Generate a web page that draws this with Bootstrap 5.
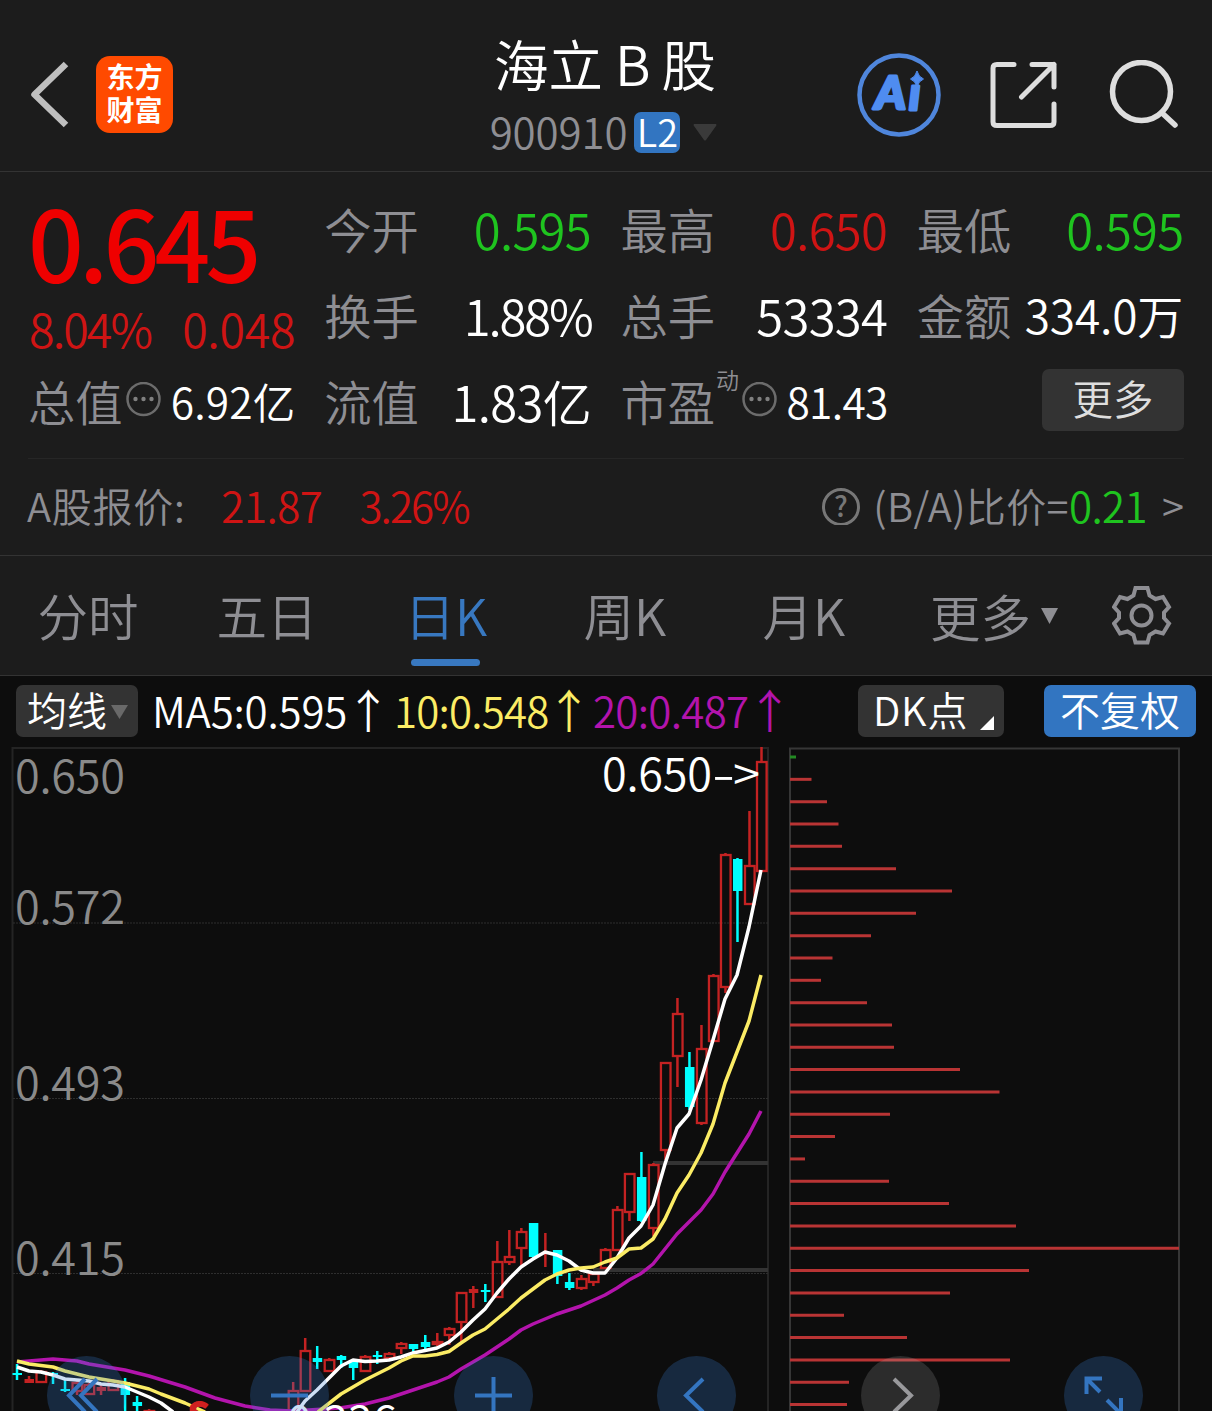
<!DOCTYPE html>
<html lang="zh-CN">
<head>
<meta charset="utf-8">
<meta name="viewport" content="width=device-width, initial-scale=1">
<title>海立B股 900910</title>
<link href="https://cdn.jsdelivr.net/npm/bootstrap@5.3.0/dist/css/bootstrap.min.css" rel="stylesheet">
<style>
  body { background:#0d0d0d; color:#fff; font-family:"Noto Sans CJK SC","Noto Sans",sans-serif; font-weight:350; overflow:hidden; white-space:nowrap; }
  .screen { width:1212px; height:1411px; overflow:hidden; }
  .panel { background:#1c1c1c; border-bottom:1px solid #333; }
  .topbar { height:172px; padding:18px 33px 0 30px; }
  .side { flex:1 1 0; }
  .app-logo { width:77px; height:77px; margin-left:27px; border-radius:14px; background:#ff4a00; font-size:28px; line-height:33px; font-weight:700; padding-top:4px; }
  .stock-name { font-size:54.5px; line-height:68px; padding-top:3px; margin-bottom:-3px; padding-left:1px; }
  .stock-name .latin { margin:0 11px 0 12px; }
  .stock-code { font-size:42px; line-height:66px; color:#8e8e93; padding-top:4px; }
  .stock-code .digits { letter-spacing:-.1px; margin-left:-2px; }
  .level { font-size:38px; line-height:41px; height:41px; width:46px; border-radius:7px; background:#3275c1; margin:4px 13px 0 7px; }
  .level span { position:relative; top:-2px; }
  .quote { height:384px; padding:13px 28px 0; }
  .quote-grid { display:grid; grid-template-columns:repeat(4,1fr); grid-template-rows:repeat(3,86px); column-gap:29px; height:274px; border-bottom:1px solid #262626; }
  .cell { display:flex; align-items:center; justify-content:space-between; font-size:49px; line-height:87px; }
  .cell .lbl { font-size:47.3px; color:#8e8e93; }
  .n1 { letter-spacing:-.7px; margin-right:.5px; }
  .n2 { letter-spacing:-2.2px; margin-right:0; }
  .s44 { font-size:42.5px; letter-spacing:-.7px; }
  .s46 { font-size:46px; letter-spacing:-.2px; margin-right:1px; }
  .headline { grid-row:span 2; color:#ef0000; padding-left:1px; }
  .price { font-size:98px; font-weight:500; line-height:110px; letter-spacing:-4.8px; margin-left:-1px; }
  .chg { font-size:46.5px; line-height:60px; color:#cf1414; margin-top:3px; }
  .up { color:#cf1414; } .down { color:#1fc41f; }
  .more-btn { width:142px; height:62px; margin-left:auto; border-radius:7px; background:#333; color:#dedede; font-size:40.500px; line-height:58px; text-align:center; }
  .pe { font-size:23px; line-height:24px; color:#8e8e93; align-self:flex-start; margin:10px 0 0 1px; }
  .compare { height:96px; font-size:40px; color:#8e8e93; line-height:90px; padding-bottom:4px; }
  .compare .up, .compare .down { font-size:42px; }
  .tabs { height:120px; font-size:50.5px; color:#8e8e93; line-height:117px; }
  .tabs .tab { width:179px; text-align:center; position:relative; padding-right:3px; }
  .tabs .active { color:#3878c0; }
  .tabs .active::after { content:""; position:absolute; left:53px; bottom:9px; width:69px; height:7px; border-radius:4px; background:#3878c0; }
  .tools { height:71px; padding:9px 16px 0; font-size:42px; }
  .chip { height:52px; border-radius:7px; background:#333; font-size:40px; line-height:48px; }
  .ma { line-height:49px; display:flex; letter-spacing:-.2px; }
  .ma .arr { width:36px; display:flex; justify-content:center; font-size:46px; line-height:46px; }
  .plot { width:1212px; height:664px; }
  .plot svg { display:block; }
  .dock { position:absolute; left:47px; top:609px; width:1096px; }
  .dock span { width:79px; height:79px; border-radius:50%; background:rgba(57,129,217,.25); }
  .dock .off { background:rgba(168,168,168,.2); }
  .dock svg { display:block; fill:none; stroke:#3475c0; stroke-width:4; }
</style>
<script src="https://cdn.jsdelivr.net/npm/bootstrap@5.3.0/dist/js/bootstrap.bundle.min.js"></script>
</head>
<body>
<main class="screen">
  <header class="panel topbar d-flex align-items-center">
    <div class="side d-flex align-items-center">
      <svg width="39" height="68" viewBox="0 0 39 68" fill="none" stroke="#bfbfbf" stroke-width="6.5"><path d="M36 3 4.500 33.500 36 64" stroke-linejoin="round"/></svg>
      <div class="app-logo text-center">东方<br>财富</div>
    </div>
    <div class="text-center">
      <div class="stock-name">海立<span class="latin">B</span>股</div>
      <div class="stock-code d-flex align-items-center justify-content-center"><span class="digits">900910</span><span class="level text-white"><span>L2</span></span><svg width="24" height="17" class="mt-1"><path d="M1 0h22q1 1 0 2L13 16q-1 1-2 0L1 2q-1-1 0-2" fill="#3a3a3a"/></svg></div>
    </div>
    <div class="side d-flex align-items-center justify-content-end gap-5">
      <svg width="84" height="84" viewBox="0 0 84 84"><circle cx="42" cy="42" r="39.500" fill="none" stroke="#4f86dc" stroke-width="4.500"/><g fill="#4f8cf0" stroke="#4f8cf0" stroke-width="3" stroke-linejoin="round" font-family="Lato" font-weight="900" font-style="italic"><text x="18" y="56" font-size="46" textLength="31" lengthAdjust="spacingAndGlyphs">A</text><text x="52" y="57" font-size="45">ı</text></g><path d="M60 18q1.500 6 6.500 8-5 2-6.500 8-1.500-6-6.500-8 5-2 6.500-8" fill="#4f8cf0" stroke="#4f8cf0"/></svg>
      <svg width="70" height="70" viewBox="0 0 70 70" fill="none" stroke="#dedede" stroke-width="5" stroke-linecap="round" stroke-linejoin="round"><path d="M25 4.500H8Q4 4.500 4 8V62Q4 65.500 8 65.500H61Q65 65.500 65 62V44M43 4.500H65V27M32.500 37 65 4.500"/></svg>
      <svg width="72" height="70" viewBox="0 0 72 70" fill="none" stroke="#dedede" stroke-width="5.500" stroke-linecap="round"><circle cx="34.500" cy="31.500" r="29"/><path d="M54.500 52.500 68 65"/></svg>
    </div>
  </header>

  <section class="panel quote">
    <div class="quote-grid">
      <div class="headline"><div class="price">0.645</div><div class="chg d-flex justify-content-between"><span style="letter-spacing:-1.900px">8.04%</span><span style="letter-spacing:-.3px">0.048</span></div></div>
      <div class="cell"><span class="lbl">今开</span><span class="n1 down">0.595</span></div>
      <div class="cell"><span class="lbl">最高</span><span class="n1 up">0.650</span></div>
      <div class="cell"><span class="lbl">最低</span><span class="n1 down">0.595</span></div>
      <div class="cell"><span class="lbl">换手</span><span class="n2">1.88%</span></div>
      <div class="cell"><span class="lbl">总手</span><span class="n1">53334</span></div>
      <div class="cell"><span class="lbl">金额</span><span class="s46">334.0万</span></div>
      <div class="cell"><span class="lbl">总值</span><svg class="me-auto" style="margin-left:3px" width="35" height="36" viewBox="0 0 35 36"><circle cx="17.500" cy="17" r="16" fill="none" stroke="#6c6c6c" stroke-width="2.500"/><g fill="#808080"><circle cx="9.500" cy="17" r="2.200"/><circle cx="17.500" cy="17" r="2.200"/><circle cx="25.500" cy="17" r="2.200"/></g></svg><span class="s44" style="letter-spacing:.1px">6.92亿</span></div>
      <div class="cell"><span class="lbl">流值</span><span class="n1">1.83亿</span></div>
      <div class="cell"><span class="lbl">市盈</span><span class="pe">动</span><svg class="me-auto" style="margin-left:3px" width="35" height="36" viewBox="0 0 35 36"><circle cx="17.500" cy="17" r="16" fill="none" stroke="#6c6c6c" stroke-width="2.500"/><g fill="#808080"><circle cx="9.500" cy="17" r="2.200"/><circle cx="17.500" cy="17" r="2.200"/><circle cx="25.500" cy="17" r="2.200"/></g></svg><span class="s44">81.43</span></div>
      <div class="cell"><div class="more-btn">更多</div></div>
    </div>
    <div class="compare d-flex align-items-center">
      <span style="letter-spacing:.7px;margin-left:-1px">A股报价:</span><span class="up" style="margin-left:36px;letter-spacing:-.5px">21.87</span><span class="up" style="margin-left:37px;letter-spacing:-1.900px">3.26%</span>
      <svg class="ms-auto" width="40" height="40" viewBox="0 0 40 40"><circle cx="20" cy="22" r="17.500" fill="none" stroke="#777" stroke-width="3"/><text x="20" y="32" text-anchor="middle" font-size="28" font-weight="500" fill="#777">?</text></svg>
      <span style="margin-left:12px;letter-spacing:.4px">(B/A)比价=</span><span class="down" style="letter-spacing:-.6px">0.21</span><span style="margin-left:15px">&gt;</span>
    </div>
  </section>

  <nav class="panel tabs d-flex">
    <div class="tab">分时</div><div class="tab">五日</div><div class="tab active">日K</div><div class="tab">周K</div><div class="tab">月K</div>
    <div class="d-flex align-items-center ps-4" style="width:217px"><span style="margin-left:11px">更多</span><svg width="17" height="16" style="margin-left:10px"><path d="M0 0H17L8.500 16Z" fill="#8e8e93"/></svg></div>
    <svg class="align-self-center" width="60" height="60" viewBox="0 0 60 60" fill="none" stroke="#8e8e93" stroke-width="4"><path d="M23.500 2H35.500L37.500 9.500 43.500 13 51 11 57 21 52 26.500V32L57 37.500 51 47.500 43.500 45.500 37.500 49 35.500 56.500H23.500L21.500 49 15.500 45.500 8 47.500 2 37.500 7 32V26.500L2 21 8 11 15.500 13 21.500 9.500Z"/><circle cx="29.500" cy="29.500" r="10"/></svg>
  </nav>

  <div class="tools d-flex">
    <div class="chip d-flex ps-2" style="width:122px"><span style="margin-left:3px">均线</span><svg width="17" height="14" style="margin:20px 0 0 4px"><path d="M0 0H17L8.500 14Z" fill="#696969"/></svg></div>
    <div class="ma" style="width:242px;padding-left:14px">MA5:0.595<span class="arr" style="margin-left:3px">↑</span></div>
    <div class="ma" style="width:199px;padding-left:14px;color:#fbec65;letter-spacing:-.8px">10:0.548<span class="arr" style="margin-left:2px">↑</span></div>
    <div class="ma" style="color:#b314ac;padding-left:14px;letter-spacing:-.7px">20:0.487<span class="arr" style="margin-left:3px">↑</span></div>
    <div class="chip ms-auto d-flex" style="width:146px;padding-left:15px;letter-spacing:.8px">DK点<svg width="14" height="14" style="margin:31px 0 0 12px"><path d="M14 0V14H0Z" fill="#fff"/></svg></div>
    <div class="chip text-center" style="width:152px;margin-left:40px;background:#3275c1">不复权</div>
  </div>

  <section class="plot position-relative">
    <svg id="chart" width="1212" height="664" viewBox="0 747 1212 664" font-family="Noto Sans CJK SC">
      <g fill="none" stroke="#242424" stroke-width="2"><path d="M12.500 1411V748H768V1411"/><path d="M13 923H768M13 1098.500H768M13 1273.500H768" stroke="#2e2e2e" stroke-width="1" stroke-dasharray="2 1"/><path d="M790 1411V748.500H1179V1411" stroke="#363636"/></g>
      <path d="M653 1163H768M593 1270H768" stroke="#333" stroke-width="4"/>
      <g id="volume"></g><g id="candles"></g>
      <g id="averages" fill="none" stroke-width="3.500" stroke-linejoin="round"></g>
      <g fill="#8a8a8a" font-size="45"><text x="15" y="793" textLength="110">0.650</text><text x="15" y="924" textLength="110">0.572</text><text x="15" y="1100" textLength="110">0.493</text><text x="15" y="1275" textLength="110">0.415</text></g>
      <g fill="#fff" font-size="45"><text x="602" y="791" textLength="110">0.650</text><text x="712" y="791" textLength="23" lengthAdjust="spacingAndGlyphs">-</text><text x="733" y="791" textLength="27" lengthAdjust="spacingAndGlyphs">&gt;</text><text x="287" y="1439" textLength="110">0.336</text></g>
      <text x="187" y="1429" font-size="37" font-weight="900" fill="#cf2020">S</text>
    </svg>
    <div class="dock d-flex justify-content-between">
      <span><svg width="79" height="79"><path d="M38 23 22 39.500 38 56M50 23 34 39.500 50 56"/></svg></span>
      <span><svg width="79" height="79"><path d="M21 39.500H58"/></svg></span>
      <span><svg width="79" height="79"><path d="M21 39.500H58M39.500 21V58"/></svg></span>
      <span><svg width="79" height="79"><path d="M46 23 29 39.500 46 56"/></svg></span>
      <span class="off"><svg width="79" height="79" style="stroke:#99999c"><path d="M33 23 50 39.500 33 56"/></svg></span>
      <span><svg width="79" height="79"><path d="M38 22.500H22.500V38M23 23 36 36M43 44 56 57M57 42V58H42"/></svg></span>
    </div>
  </section>
</main>
<script>
  // [slot, type, high, top, bottom, low]; h = hollow red, f = filled red, c = cyan
  const candles = [
    [0,'c',1364,1373,1375,1380],[1,'f',1376,1379,1383,1383],[2,'h',1370,1372,1382,1383],[3,'c',1372,1373,1375,1384],[4,'c',1378,1389,1391,1392],
    [5,'h',1381,1383,1391,1395],[6,'h',1383,1385,1394,1394],[7,'f',1383,1387,1391,1395],[8,'h',1379,1381,1390,1391],[9,'c',1378,1382,1395,1415],
    [10,'c',1396,1402,1406,1415],[11,'h',1409,1411,1420,1420],[23,'h',1382,1391,1420,1420],[24,'h',1338,1351,1391,1391],[25,'c',1346,1358,1362,1369],
    [26,'h',1358,1360,1371,1372],[27,'c',1355,1356,1360,1368],[28,'c',1360,1362,1368,1380],[29,'h',1355,1357,1371,1372],[30,'c',1351,1355,1357,1364],
    [31,'h',1352,1354,1358,1359],[32,'h',1342,1344,1348,1354],[33,'c',1344,1344,1349,1352],[34,'c',1335,1342,1347,1352],[35,'h',1333,1342,1344,1346],
    [36,'h',1327,1329,1335,1345],[37,'h',1292,1293,1322,1342],[38,'f',1286,1289,1293,1308],[39,'c',1284,1290,1292,1302],[40,'h',1241,1262,1297,1298],
    [41,'h',1230,1257,1262,1265],[42,'h',1228,1232,1248,1265],[43,'c',1223,1223,1257,1258],[44,'f',1233,1250,1250,1267],[45,'c',1250,1250,1276,1284],
    [46,'c',1273,1282,1288,1290],[47,'h',1275,1279,1288,1290],[48,'h',1272,1274,1282,1286],[49,'h',1248,1250,1268,1269],[50,'h',1206,1210,1250,1251],
    [51,'h',1173,1174,1212,1221],[52,'c',1152,1177,1221,1222],[53,'h',1163,1165,1228,1236],[54,'h',1062,1063,1150,1160],[55,'h',998,1014,1056,1087],
    [56,'c',1052,1067,1107,1110],[57,'h',1025,1049,1123,1125],[58,'h',974,976,1041,1042],[59,'h',853,855,987,993],[60,'c',858,859,891,942],
    [61,'h',811,866,904,905],[62,'h',747,762,871,872]];
  const averages = {
    '#b314ac': [[17,1362,29,1361,53,1359,65,1360,77,1361,89,1364,125,1370,149,1376,185,1387,215,1398,245,1406,270,1410,293,1411,340,1408,365,1404,389,1398,413,1390,437,1382,449,1377,461,1369,485,1355,509,1339,521,1330,533,1324,545,1319,557,1314,581,1306,605,1295,617,1288,629,1280,641,1273.5,653,1264,665,1249,677,1234,701,1210,713,1194,725,1172,737,1153,749,1134,761,1111]],
    '#fff': [[17,1367,29,1371,41,1372,53,1375,65,1379,77,1380,89,1381,101,1384,113,1385,125,1387,137,1392,149,1397,161,1403,173,1412],[297,1412,305,1401,317,1390,329,1378,341,1366,353,1360,365,1361.5,377,1361,389,1360,401,1357,413,1353,425,1350.5,437,1348,449,1342,461,1332,473,1320,485,1309,497,1293,509,1279,521,1267,533,1259,545,1252,557,1255,569,1261,581,1270,593,1273,605,1273,617,1258,629,1238,641,1226,653,1205,665,1164,677,1128,689,1114,701,1080,713,1040,725,999,737,975,749,927,761,870]],
    '#fbec65': [[17,1361,29,1364,53,1367,65,1371,77,1374,89,1377,125,1383,149,1389,161,1394,185,1403,205,1412],[318,1412,341,1394,365,1380,389,1368,401,1361,413,1356,425,1356,437,1354.5,449,1351.5,461,1343,473,1335,485,1329,497,1319,509,1309,521,1298,533,1289,545,1280,557,1274,569,1270,581,1268,593,1267,605,1262,617,1258,629,1249,641,1248,653,1239,665,1219,677,1193,689,1175,701,1153,713,1124,725,1083,737,1052,749,1021,761,975]]
  };
  const volume = [796,811.5,827,838.5,842,896,952,916,871,832.5,821,867,892,894,960,999.5,890,835,805,889,949,1016,1179,1029,950,844,907,1010,849,847];
  document.getElementById('candles').innerHTML = candles.map(([i,k,h,t,b,l]) => {
    const x = 17 + i * 12.008, col = k === 'c' ? '#00ffff' : '#c42222';
    const wick = k === 'h' ? `M${x} ${h}V${t}M${x} ${b}V${l}` : `M${x} ${h}V${l}`;
    const body = k === 'h' ? `<rect x="${x-4.5}" y="${t}" width="9.600" height="${b-t}" fill="none" stroke="${col}" stroke-width="2.300"/>`
                           : `<rect x="${x-4.5}" y="${t}" width="9.500" height="${b-t}" fill="${col}"/>`;
    return `<path d="${wick}" stroke="${col}" stroke-width="2.500"/>${body}`;
  }).join('');
  document.getElementById('averages').innerHTML = Object.entries(averages).map(([c,lines]) =>
    lines.map(p => `<polyline points="${p.join(' ')}" stroke="${c}"/>`).join('')).join('');
  document.getElementById('volume').innerHTML = volume.map((x,i) =>
    `<path d="M790 ${757 + i*22.33}H${x}" stroke="${i ? '#b93434' : '#238a23'}" stroke-width="3"/>`).join('');
</script>
</body>
</html>
